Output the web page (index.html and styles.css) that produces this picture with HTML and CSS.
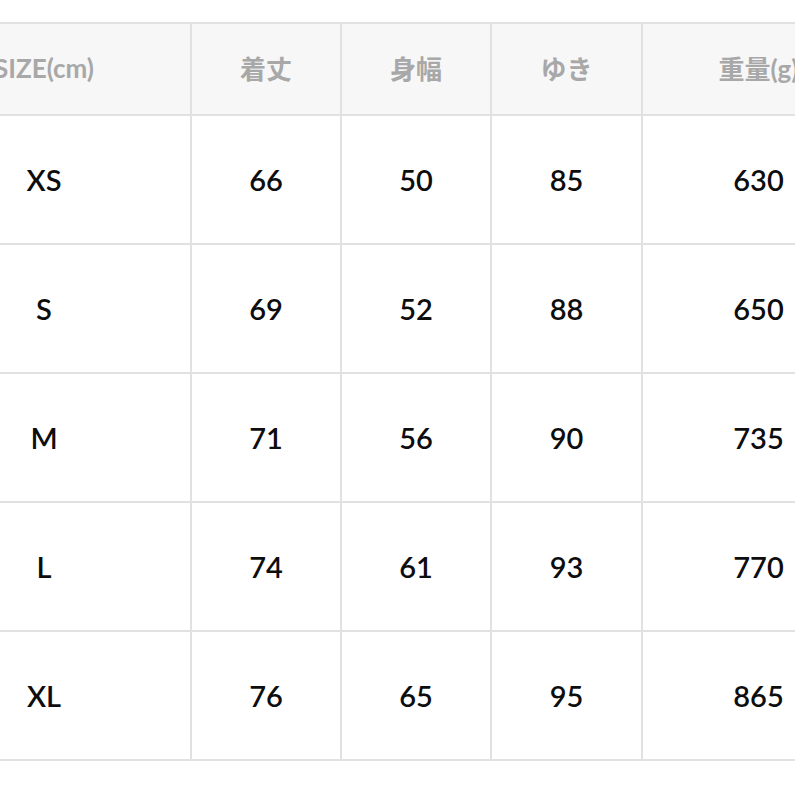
FILE: index.html
```html
<!DOCTYPE html>
<html lang="ja">
<head>
<meta charset="utf-8">
<title>サイズ表</title>
<link rel="stylesheet" href="styles.css">
</head>
<body>
<div class="sheet">
  <div class="size-table">
    <div class="cell head">SIZE(cm)</div>
    <div class="cell head">着丈</div>
    <div class="cell head">身幅</div>
    <div class="cell head">ゆき</div>
    <div class="cell head">重量(g)</div>

    <div class="cell">XS</div><div class="cell">66</div><div class="cell">50</div><div class="cell">85</div><div class="cell">630</div>
    <div class="cell">S</div><div class="cell">69</div><div class="cell">52</div><div class="cell">88</div><div class="cell">650</div>
    <div class="cell">M</div><div class="cell">71</div><div class="cell">56</div><div class="cell">90</div><div class="cell">735</div>
    <div class="cell">L</div><div class="cell">74</div><div class="cell">61</div><div class="cell">93</div><div class="cell">770</div>
    <div class="cell">XL</div><div class="cell">76</div><div class="cell">65</div><div class="cell">95</div><div class="cell">865</div>
  </div>
</div>
</body>
</html>
```
FILE: styles.css
```css
html, body {
  margin: 0;
  padding: 0;
  background: #ffffff;
  overflow: hidden;
}

.sheet {
  padding-top: 22px;
  width: 795px;
  height: 795px;
  overflow: hidden;
}

.size-table {
  display: grid;
  grid-template-columns: 292px 148px 148px 149px 231px;
  grid-template-rows: 90px repeat(5, 127px);
  gap: 2px;
  padding: 2px;
  background: #e1e1e1;
  width: max-content;
  margin-left: -104px;
}

.cell {
  background: #ffffff;
  display: flex;
  align-items: center;
  justify-content: center;
  font-family: "Lato", "Noto Sans CJK JP", sans-serif;
  font-size: 29px;
  font-weight: 600;
  color: #0d0d0d;
}

.cell.head {
  background: #f7f7f7;
  color: #a8a8a8;
  font-size: 26px;
  font-weight: 700;
  padding-bottom: 3px;
}
```
